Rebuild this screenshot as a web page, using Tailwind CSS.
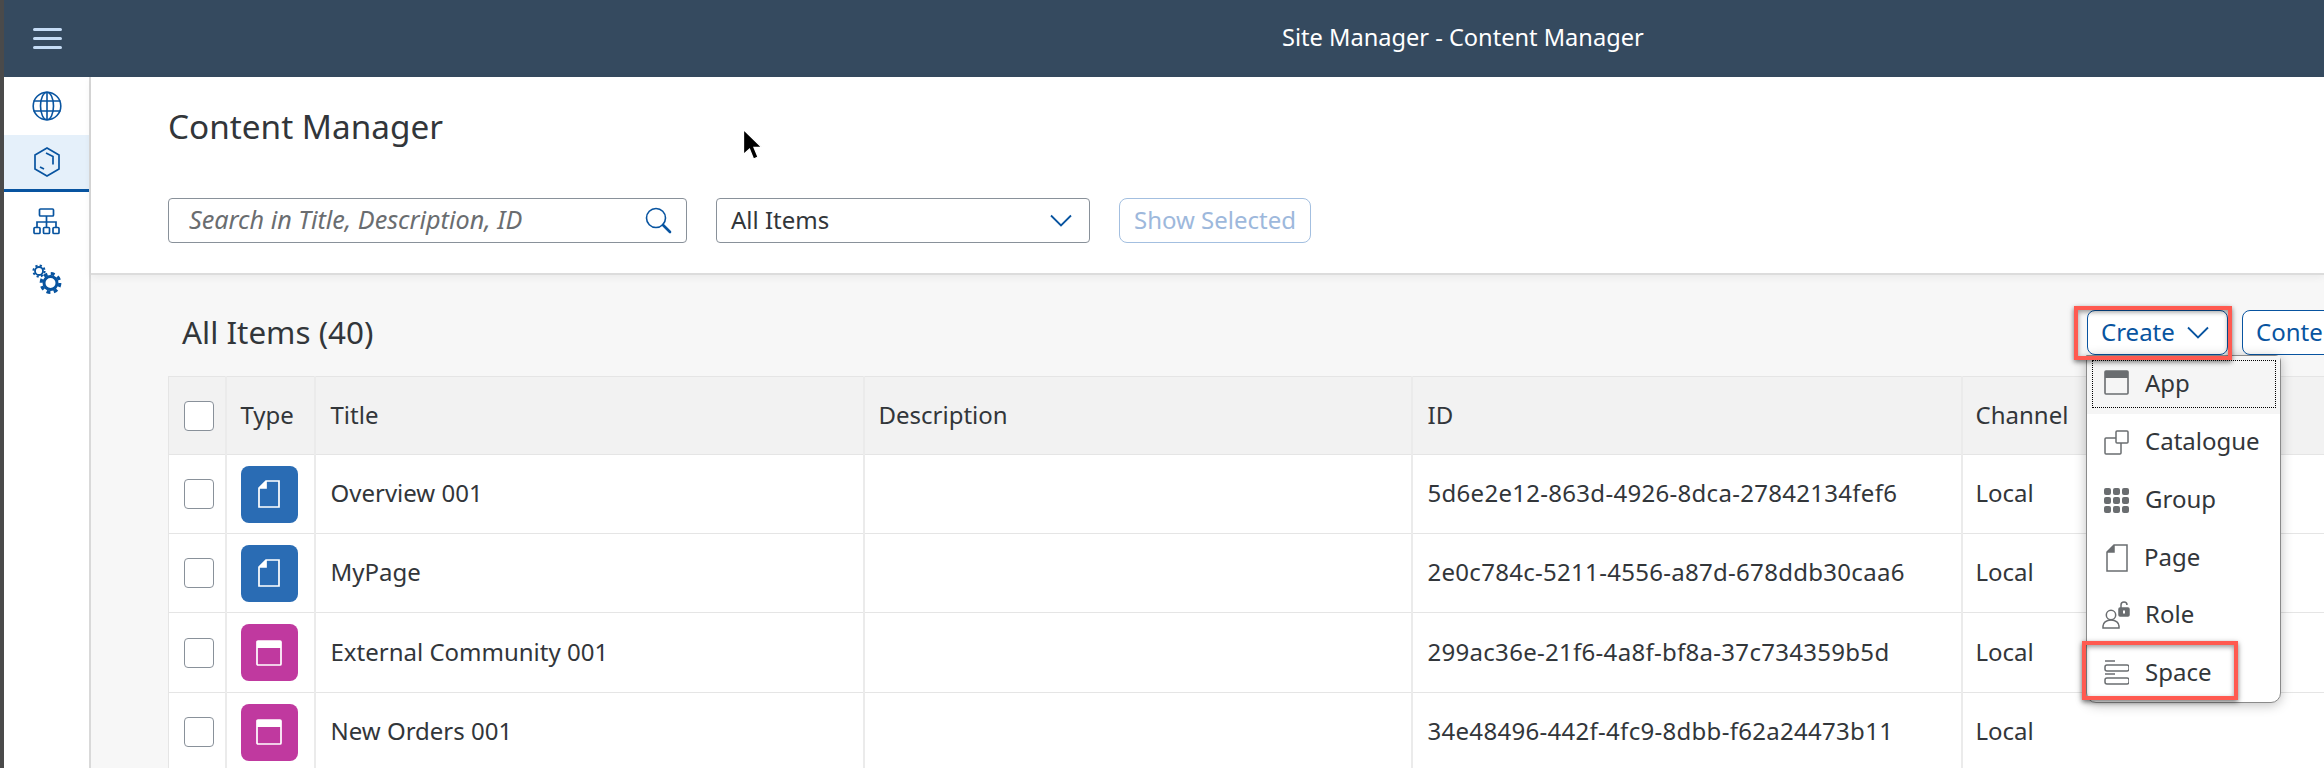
<!DOCTYPE html>
<html lang="en">
<head>
    <meta charset="UTF-8" />
    <title>Site Manager - Content Manager</title>
    <script src="https://cdn.jsdelivr.net/npm/@tailwindcss/browser@4"></script>
</head>
<body class="bg-white overflow-hidden font-['Noto_Sans',sans-serif] text-[24px] text-[#32363a]">
<div class="relative flex w-[2324px] h-[768px] overflow-hidden">
    <div class="w-[4px] shrink-0 bg-[#4a4a4a]"></div>
    <div class="flex-1 flex flex-col min-w-0">
        <!-- shell bar -->
        <header class="h-[77px] shrink-0 bg-[#354a5f] flex items-center relative">
            <svg class="ml-[29px] w-[29px] h-[23px]" viewBox="0 0 29 23" fill="none" stroke="#c5dcf5" stroke-width="3" stroke-linecap="round"><path d="M1.5 2.500h26M1.500 11.500h26M1.500 20.500h26"/></svg>
            <div class="absolute left-[1278px] top-0 h-[75px] flex items-center text-white text-[23.600px] whitespace-nowrap">Site Manager - Content Manager</div>
        </header>
        <div class="flex-1 flex min-h-0">
            <!-- side nav -->
            <nav class="w-[87px] shrink-0 border-r-2 border-[#d9d9d9] flex flex-col">
                <div class="h-[58px] flex items-center justify-center">
                    <svg class="w-[30px] h-[30px]" viewBox="0 0 30 30" fill="none" stroke="#0854a0" stroke-width="1.600"><circle cx="15" cy="15" r="13.800"/><ellipse cx="15" cy="15" rx="6.500" ry="13.800"/><path d="M15 1v28M1.500 10h27M1.500 20h27"/></svg>
                </div>
                <div class="h-[57px] bg-[#e5f0fa] border-b-[3px] border-[#0854a0] flex items-center justify-center">
                    <svg class="w-[26px] h-[30px]" viewBox="0 0 26 30" fill="none" stroke="#0854a0" stroke-width="1.700"><path d="M13 1l12 7v14l-12 7-12-7V8z"/><path d="M12 6l7 3.500v8M6 20l4 2"/></svg>
                </div>
                <div class="h-[58px] flex items-center justify-center">
                    <svg class="w-[27px] h-[27px]" viewBox="0 0 27 27" fill="none" stroke="#0854a0" stroke-width="1.700"><rect x="6.500" y="1" width="14" height="7" rx="1"/><path d="M13.500 8v6M4 19v-5h19v5M13.500 14v5"/><rect x="1" y="19.500" width="6" height="6" rx="1"/><rect x="10.500" y="19.500" width="6" height="6" rx="1"/><rect x="20" y="19.500" width="6" height="6" rx="1"/></svg>
                </div>
                <div class="h-[57px] flex items-center justify-center">
                    <svg class="w-[30px] h-[30px]" viewBox="0 0 30 30" fill="none" stroke="#0854a0"><circle cx="7" cy="7" r="4" stroke-width="1.800"/><circle cx="7" cy="7" r="5.600" stroke-width="2" stroke-dasharray="2.200 2.200"/><circle cx="18.500" cy="19" r="6.500" stroke-width="3"/><circle cx="18.500" cy="19" r="9.300" stroke-width="3.200" stroke-dasharray="3.900 3.400"/></svg>
                </div>
            </nav>
            <main class="flex-1 min-w-0 flex flex-col">
                <!-- page header -->
                <section class="shrink-0 border-b-2 border-[#dcdcdc] pl-[77px] pt-[28px] pb-[30px] shadow-[0_2px_8px_rgba(0,0,0,0.06)] relative z-10 bg-white">
                    <h1 class="h-[42px] leading-[42px] text-[33.300px] mb-[51px]">Content Manager</h1>
                    <div class="flex">
                        <div class="w-[519px] h-[45px] border border-[#89919a] rounded-[4px] flex items-center justify-between pl-[20px] pr-[14px]">
                            <span class="italic text-[#6a6d70] text-[25.200px] -mt-[2px]">Search in Title, Description, ID</span>
                            <svg class="w-[27px] h-[27px]" viewBox="0 0 27 27" fill="none" stroke="#0854a0"><circle cx="11" cy="11" r="9.500" stroke-width="1.600"/><path d="M18 18l7 7" stroke-width="2.600" stroke-linecap="round"/></svg>
                        </div>
                        <div class="ml-[29px] w-[374px] h-[45px] border border-[#89919a] rounded-[4px] flex items-center justify-between pl-[14px] pr-[17px]">
                            <span class="-mt-[2px]">All Items</span>
                            <svg class="w-[22px] h-[13px]" viewBox="0 0 22 13" fill="none" stroke="#0854a0" stroke-width="1.800"><path d="M1 1.500l10 10 10-10"/></svg>
                        </div>
                        <button class="ml-[29px] w-[192px] h-[45px] border border-[#a3bfe0] rounded-[8px] text-[#9db8dc] text-center pb-[2px]">Show Selected</button>
                    </div>
                </section>
                <!-- table area -->
                <section class="flex-1 bg-[#f7f7f7] pl-[77px] pt-[35px] min-h-0">
                    <div class="flex items-center w-[2400px] h-[45px] mb-[21px]">
                        <div class="w-[1919px] pl-[14px] text-[31.400px] shrink-0 -mt-[2px]">All Items (40)</div>
                        <button class="w-[141px] h-[45px] shrink-0 bg-white border border-[#0854a0] rounded-[8px] text-[#0854a0] flex items-center justify-between pl-[13px] pr-[18px] pb-[2px]">
                            Create
                            <svg class="w-[22px] h-[13px] mt-[2px]" viewBox="0 0 22 13" fill="none" stroke="#0854a0" stroke-width="1.800"><path d="M1 1.500l10 10 10-10"/></svg>
                        </button>
                        <button class="ml-[14px] w-[220px] h-[45px] shrink-0 bg-white border border-[#0854a0] rounded-[8px] text-[#0854a0] text-left pl-[13px] pb-[2px] whitespace-nowrap">Content Manager</button>
                    </div>
                    <table class="table-fixed border-collapse w-[2400px] bg-white">
                        <colgroup>
                            <col class="w-[57px]" /><col class="w-[89px]" /><col class="w-[549px]" /><col class="w-[548px]" /><col class="w-[550px]" /><col />
                        </colgroup>
                        <thead>
                            <tr class="h-[78px] bg-[#f2f2f2] border border-[#e5e5e5] text-left">
                                <th class="border-r-2 border-[#ebebeb] pl-[15px] font-normal"><span class="block w-[30px] h-[30px] bg-white border border-[#89919a] rounded-[4px]"></span></th>
                                <th class="border-r-2 border-[#ebebeb] pl-[14px] font-normal pb-[2px]">Type</th>
                                <th class="border-r-2 border-[#ebebeb] pl-[15px] font-normal pb-[2px]">Title</th>
                                <th class="border-r-2 border-[#ebebeb] pl-[14px] font-normal pb-[2px]">Description</th>
                                <th class="border-r-2 border-[#ebebeb] pl-[15px] font-normal pb-[2px]">ID</th>
                                <th class="pl-[13px] font-normal pb-[2px]">Channel</th>
                            </tr>
                        </thead>
                        <tbody>
                            <tr class="h-[79px] border border-[#e5e5e5]">
                                <td class="border-r-2 border-[#ebebeb] pl-[15px]"><span class="block w-[30px] h-[30px] border border-[#89919a] rounded-[4px]"></span></td>
                                <td class="border-r-2 border-[#ebebeb] pl-[14px]">
                                    <span class="w-[57px] h-[57px] rounded-[8px] bg-[#2a6cb4] flex items-center justify-center"><svg class="w-[22px] h-[28px]" viewBox="0 0 22 28" fill="none" stroke="#fff" stroke-width="1.700"><path d="M8 1h13v26H1V8z"/><path d="M1 8h7V1" fill="#fff"/></svg></span>
                                </td>
                                <td class="border-r-2 border-[#ebebeb] pl-[15px] pb-[2px]">Overview 001</td>
                                <td class="border-r-2 border-[#ebebeb]"></td>
                                <td class="border-r-2 border-[#ebebeb] pl-[15px] pb-[2px] tracking-[0.29px]">5d6e2e12-863d-4926-8dca-27842134fef6</td>
                                <td class="pl-[13px] pb-[2px]">Local</td>
                            </tr>
                            <tr class="h-[79px] border border-[#e5e5e5]">
                                <td class="border-r-2 border-[#ebebeb] pl-[15px]"><span class="block w-[30px] h-[30px] border border-[#89919a] rounded-[4px]"></span></td>
                                <td class="border-r-2 border-[#ebebeb] pl-[14px]">
                                    <span class="w-[57px] h-[57px] rounded-[8px] bg-[#2a6cb4] flex items-center justify-center"><svg class="w-[22px] h-[28px]" viewBox="0 0 22 28" fill="none" stroke="#fff" stroke-width="1.700"><path d="M8 1h13v26H1V8z"/><path d="M1 8h7V1" fill="#fff"/></svg></span>
                                </td>
                                <td class="border-r-2 border-[#ebebeb] pl-[15px] pb-[2px]">MyPage</td>
                                <td class="border-r-2 border-[#ebebeb]"></td>
                                <td class="border-r-2 border-[#ebebeb] pl-[15px] pb-[2px] tracking-[0.29px]">2e0c784c-5211-4556-a87d-678ddb30caa6</td>
                                <td class="pl-[13px] pb-[2px]">Local</td>
                            </tr>
                            <tr class="h-[80px] border border-[#e5e5e5]">
                                <td class="border-r-2 border-[#ebebeb] pl-[15px]"><span class="block w-[30px] h-[30px] border border-[#89919a] rounded-[4px]"></span></td>
                                <td class="border-r-2 border-[#ebebeb] pl-[14px]">
                                    <span class="w-[57px] h-[57px] rounded-[8px] bg-[#c0399f] flex items-center justify-center"><svg class="w-[26px] h-[26px]" viewBox="0 0 26 26" fill="none" stroke="#fff" stroke-width="1.700"><rect x="1" y="1" width="24" height="24" rx="1"/><path d="M1 4.500h24" stroke-width="7"/></svg></span>
                                </td>
                                <td class="border-r-2 border-[#ebebeb] pl-[15px] pb-[2px]">External Community 001</td>
                                <td class="border-r-2 border-[#ebebeb]"></td>
                                <td class="border-r-2 border-[#ebebeb] pl-[15px] pb-[2px] tracking-[0.29px]">299ac36e-21f6-4a8f-bf8a-37c734359b5d</td>
                                <td class="pl-[13px] pb-[2px]">Local</td>
                            </tr>
                            <tr class="h-[79px] border border-[#e5e5e5]">
                                <td class="border-r-2 border-[#ebebeb] pl-[15px]"><span class="block w-[30px] h-[30px] border border-[#89919a] rounded-[4px]"></span></td>
                                <td class="border-r-2 border-[#ebebeb] pl-[14px]">
                                    <span class="w-[57px] h-[57px] rounded-[8px] bg-[#c0399f] flex items-center justify-center"><svg class="w-[26px] h-[26px]" viewBox="0 0 26 26" fill="none" stroke="#fff" stroke-width="1.700"><rect x="1" y="1" width="24" height="24" rx="1"/><path d="M1 4.500h24" stroke-width="7"/></svg></span>
                                </td>
                                <td class="border-r-2 border-[#ebebeb] pl-[15px] pb-[2px]">New Orders 001</td>
                                <td class="border-r-2 border-[#ebebeb]"></td>
                                <td class="border-r-2 border-[#ebebeb] pl-[15px] pb-[2px] tracking-[0.29px]">34e48496-442f-4fc9-8dbb-f62a24473b11</td>
                                <td class="pl-[13px] pb-[2px]">Local</td>
                            </tr>
                        </tbody>
                    </table>
                </section>
            </main>
        </div>
    </div>

    <!-- create menu -->
    <div class="absolute z-20 left-[2086px] top-[355px] w-[195px] h-[348px] bg-white border border-[#8a8a8a] rounded-b-[10px] rounded-tr-[6px] shadow-[0_2px_12px_rgba(0,0,0,0.25)]">
        <div class="relative h-[58px] bg-[#f5f5f5] flex items-center">
            <div class="absolute left-[5px] top-[4px] right-[4px] bottom-[6px] border border-dotted border-black"></div>
            <svg class="ml-[17px] w-[25px] h-[25px] -mt-[6px]" viewBox="0 0 25 25" fill="none" stroke="#6a6d70" stroke-width="1.600"><rect x="1" y="1" width="23" height="23" rx="1"/><path d="M1 4.500h23" stroke-width="7"/></svg>
            <span class="ml-[16px] -mt-[4px]">App</span>
        </div>
        <div class="h-[57.500px] flex items-center">
            <svg class="ml-[17px] w-[25px] h-[25px]" viewBox="0 0 25 25" fill="none" stroke="#6a6d70" stroke-width="1.500"><rect x="12" y="1" width="12" height="12" rx="1"/><path d="M12 8H2a1 1 0 0 0-1 1v14a1 1 0 0 0 1 1h14a1 1 0 0 0 1-1V13"/></svg>
            <span class="ml-[16px] -mt-[3px]">Catalogue</span>
        </div>
        <div class="h-[57.500px] flex items-center">
            <svg class="ml-[17px] w-[25px] h-[25px]" viewBox="0 0 25 25" fill="#6a6d70"><rect x="0" y="0" width="7" height="7" rx="2"/><rect x="9" y="0" width="7" height="7" rx="2"/><rect x="18" y="0" width="7" height="7" rx="2"/><rect x="0" y="9" width="7" height="7" rx="2"/><rect x="9" y="9" width="7" height="7" rx="2"/><rect x="18" y="9" width="7" height="7" rx="2"/><rect x="0" y="18" width="7" height="7" rx="2"/><rect x="9" y="18" width="7" height="7" rx="2"/><rect x="18" y="18" width="7" height="7" rx="2"/></svg>
            <span class="ml-[16px] -mt-[3px]">Group</span>
        </div>
        <div class="h-[57.500px] flex items-center">
            <svg class="ml-[19px] w-[22px] h-[28px]" viewBox="0 0 22 28" fill="none" stroke="#6a6d70" stroke-width="1.500"><path d="M8 1h13v26H1V8z"/><path d="M1 8h7V1" fill="#6a6d70"/></svg>
            <span class="ml-[16px] -mt-[2px]">Page</span>
        </div>
        <div class="h-[57.500px] flex items-center">
            <svg class="ml-[15px] w-[28px] h-[28px]" viewBox="0 0 28 28" fill="none" stroke="#6a6d70" stroke-width="1.500"><circle cx="9" cy="14" r="4.700"/><path d="M1 27v-2c0-3 3-6 8-6s8 3 8 6v2z"/><rect x="17" y="7" width="10" height="8" rx="1" fill="#6a6d70"/><rect x="21" y="9.500" width="2" height="3" fill="#fff" stroke="none"/><path d="M19 7V4a3 3 0 0 1 6 0"/></svg>
            <span class="ml-[15px] -mt-[3px]">Role</span>
        </div>
        <div class="h-[57.500px] flex items-center">
            <svg class="ml-[17px] w-[25px] h-[25px]" viewBox="0 0 25 25" fill="none" stroke="#6a6d70" stroke-width="1.500"><path d="M1 1h10"/><rect x="1" y="5" width="24" height="6" rx="2"/><path d="M1 14h10"/><rect x="1" y="18" width="24" height="6" rx="2"/></svg>
            <span class="ml-[16px] -mt-[2px]">Space</span>
        </div>
    </div>

    <!-- callouts -->
    <div class="absolute z-30 left-[2074px] top-[306px] w-[158px] h-[54px] border-[4px] border-[#ff5a50] shadow-[0_2px_5px_rgba(0,0,0,0.55),inset_0_2px_5px_rgba(0,0,0,0.4)]"></div>
    <div class="absolute z-30 left-[2082px] top-[641px] w-[156px] h-[59px] border-[4px] border-[#ff5a50] shadow-[0_2px_5px_rgba(0,0,0,0.55),inset_0_2px_5px_rgba(0,0,0,0.4)]"></div>

    <!-- mouse pointer -->
    <svg class="absolute z-40 left-[742px] top-[128px] w-[22px] h-[34px]" viewBox="0 0 22 34"><path d="M1.500 1.500v25l6-5.500 4 10 4.500-2-4-9.500h8z" fill="#000" stroke="#fff" stroke-width="1.300"/></svg>
</div>
</body>
</html>
